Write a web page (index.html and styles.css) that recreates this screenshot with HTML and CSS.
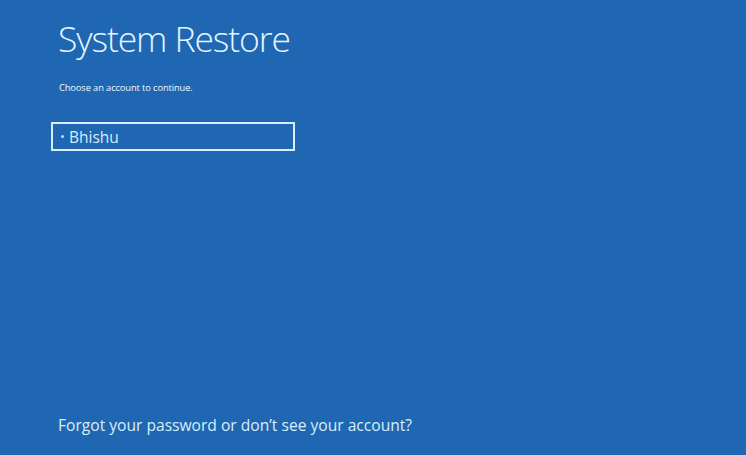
FILE: index.html
```html
<!DOCTYPE html>
<html>
<head>
<meta charset="utf-8">
<link rel="stylesheet" href="styles.css">
</head>
<body>
<div class="screen">
  <div class="top">
    <h1 class="title">System Restore</h1>
    <p class="subtitle">Choose an account to continue.</p>
    <div class="account">
      <span class="dot"></span>
      <span class="name">Bhishu</span>
    </div>
  </div>
  <div class="bottom">
    <a class="forgot">Forgot your password or don’t see your account?</a>
  </div>
</div>
</body>
</html>
```

FILE: styles.css
```css
html, body {
  margin: 0;
  padding: 0;
  background: #1f67b2;
}
.screen {
  width: 746px;
  height: 455px;
  box-sizing: border-box;
  padding: 16px 0 0 58px;
  display: flex;
  flex-direction: column;
  font-family: "Open Sans", "Noto Sans", sans-serif;
  color: #e4f3fc;
}
.top {
  flex: 1;
}
.title {
  margin: 0;
  font-family: "Open Sans", sans-serif;
  font-weight: 300;
  font-size: 35.5px;
  line-height: 44px;
  letter-spacing: -1.1px;
  color: #e6f4fc;
}
.subtitle {
  margin: 22px 0 0 1px;
  font-size: 9.3px;
  line-height: 11px;
  letter-spacing: -0.1px;
  color: #f2f9fe;
}
.account {
  margin: 29px 0 0 -7px;
  width: 244px;
  height: 29px;
  box-sizing: border-box;
  border: 2px solid #d6eefb;
  display: flex;
  align-items: center;
  padding-left: 8px;
  gap: 5px;
}
.dot {
  width: 3px;
  height: 3px;
  border-radius: 50%;
  background: #bfe0f5;
}
.name {
  font-size: 15.5px;
  font-weight: 400;
  color: #d4ecfa;
  line-height: 20px;
}
.bottom {
  padding-bottom: 19px;
}
.forgot {
  font-size: 15.6px;
  font-weight: 400;
  color: #d8eefa;
  line-height: 20px;
}
```
